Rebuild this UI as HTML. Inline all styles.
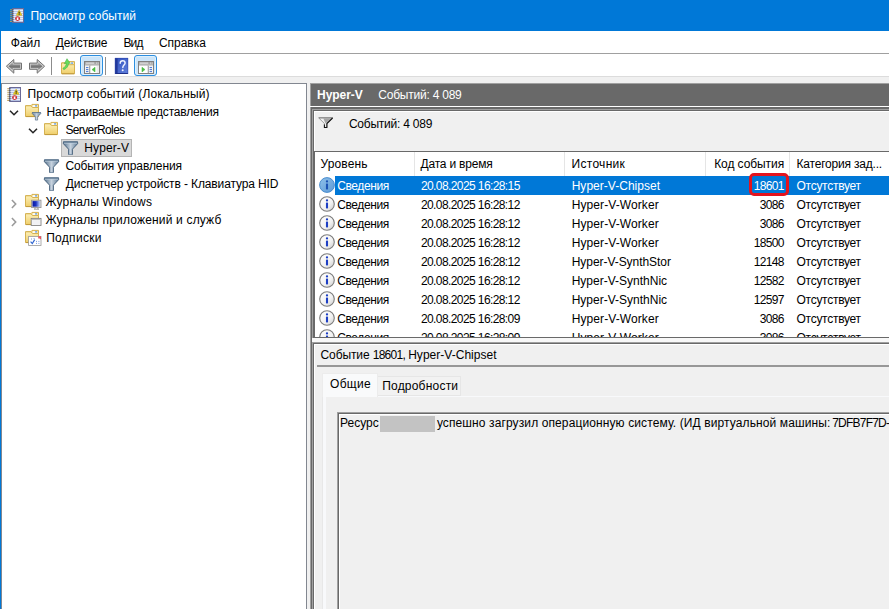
<!DOCTYPE html><html><head><meta charset="utf-8"><title>Event Viewer</title><style>
html,body{margin:0;padding:0}
body{width:889px;height:609px;overflow:hidden;position:relative;background:#f0f0f0;font:12px/16px "Liberation Sans",sans-serif;color:#000}
.a{position:absolute}
.t{position:absolute;white-space:pre;height:16px}
.i{position:absolute;overflow:visible}
.tb{position:absolute;left:0;top:0;width:889px;height:31px;background:#0078d7}
.menu{position:absolute;left:1px;top:31px;width:888px;height:22px;background:#fff}
.tool{position:absolute;left:1px;top:54px;width:888px;height:22px;background:#fff}
.btn{position:absolute;top:55px;width:21px;height:19px;border:1px solid #2d8fe0;border-radius:3px;background:#cce5f9;box-shadow:inset 0 0 0 1px #def0fc}
.sep{position:absolute;top:57px;width:1px;height:18px;background:#8c8c8c}
.tree{position:absolute;left:1px;top:83px;width:306px;height:540px;background:#fff;border:1px solid #828790;box-sizing:border-box;border-bottom:0}
.sel{position:absolute;left:61px;top:139px;width:69px;height:16px;background:#d9d9d9;border:1px solid #b4b4b4}
.rp{position:absolute;left:310px;top:83px;width:600px;height:540px;background:#696969;border-left:1px solid #a0a0a0;border-top:1px solid #a0a0a0;box-sizing:border-box}
.hl{position:absolute;background:#fff}
.f3{position:absolute;box-sizing:border-box;border-left:1px solid #a0a0a0;border-top:1px solid #a0a0a0;background:#696969}
.p{position:absolute;background:#f0f0f0;border-left:1px solid #fff;border-top:1px solid #fff;box-sizing:border-box}
.list{position:absolute;left:314px;top:151px;width:600px;height:187px;background:#fff;border-left:1px solid #696969;border-top:1px solid #696969;border-bottom:1px solid #696969;box-sizing:border-box;overflow:hidden}
.cs{position:absolute;top:152px;width:1px;height:24px;background:#e5e5e5}
.rowsel{position:absolute;left:335px;top:176px;width:560px;height:19px;background:#0078d7}
.red{position:absolute;left:749px;top:173px;width:34px;height:17px;border:3px solid #e4141e;border-radius:5px}
.clip{position:absolute;left:315px;top:152px;width:574px;height:185px;overflow:hidden}
.tab1{position:absolute;left:322px;top:373px;width:56px;height:24px;background:#f9fafb;border:1px solid #ececec;border-bottom:0;box-sizing:border-box}
.tab2{position:absolute;left:377px;top:376px;width:84px;height:20px;background:#f2f2f2;border:1px solid #e6e6e6;box-sizing:border-box}
.tabp{position:absolute;left:322px;top:396px;width:600px;height:240px;background:#f8f9fb;border-left:1px solid #e8e8e8;box-sizing:border-box}
.tabc{position:absolute;left:326px;top:397px;width:580px;height:230px;background:#f0f0f0}
.tx{position:absolute;left:337px;top:412px;width:600px;height:220px;box-sizing:border-box;border-left:1px solid #a0a0a0;border-top:1px solid #a0a0a0;background:#696969}
.tx2{position:absolute;left:1px;top:1px;right:0;bottom:0;background:#f0f0f0;border-left:1px solid #fff;border-top:1px solid #fff}
.redact{position:absolute;left:380px;top:416px;width:55px;height:16px;background:#c3c3c3}
</style></head><body>
<svg width="0" height="0" style="position:absolute"><defs>
<linearGradient id="gFold" x1="0" y1="0" x2="0" y2="1"><stop offset="0" stop-color="#fdf0b8"/><stop offset="1" stop-color="#efce6a"/></linearGradient>
<linearGradient id="gArr" x1="0" y1="0" x2="0" y2="1"><stop offset="0" stop-color="#b4b4b4"/><stop offset=".55" stop-color="#747474"/><stop offset="1" stop-color="#a4a4a4"/></linearGradient>
<linearGradient id="gFun" x1="0" y1="0" x2="1" y2="0"><stop offset="0" stop-color="#54708b"/><stop offset=".5" stop-color="#c6d2de"/><stop offset="1" stop-color="#5f7b96"/></linearGradient>
<linearGradient id="gHelp" x1="0" y1="0" x2="1" y2="1"><stop offset="0" stop-color="#2f50bd"/><stop offset="1" stop-color="#6180dc"/></linearGradient>
<linearGradient id="gInfo" x1="0" y1="0" x2="1" y2="1"><stop offset="0" stop-color="#ffffff"/><stop offset=".6" stop-color="#f2f2f2"/><stop offset="1" stop-color="#c8c8c8"/></linearGradient>
<linearGradient id="gInfoS" x1="0" y1="0" x2="1" y2="1"><stop offset="0" stop-color="#8fc0ea"/><stop offset="1" stop-color="#5c9ad6"/></linearGradient>
<linearGradient id="gMon" x1="0" y1="0" x2="1" y2="0"><stop offset="0" stop-color="#0a18a0"/><stop offset=".45" stop-color="#1a32c2"/><stop offset="1" stop-color="#c4d8fc"/></linearGradient>
<linearGradient id="gBtn" x1="0" y1="0" x2="0" y2="1"><stop offset="0" stop-color="#d6ebfb"/><stop offset=".45" stop-color="#cce4f7"/><stop offset="1" stop-color="#d2e8f9"/></linearGradient>
</defs></svg>
<div class="tb"></div>
<div class="menu"></div><div class="a" style="left:1px;top:53px;width:888px;height:1px;background:#a0a0a0"></div>
<div class="tool"></div><div class="a" style="left:1px;top:76px;width:888px;height:1px;background:#dcdcdc"></div>
<div class="a" style="left:0;top:0;width:1px;height:609px;background:#0078d7"></div>
<svg class="i" style="left:10px;top:8px" width="14" height="15" viewBox="0 0 14 15" ><rect x="2.700" y=".5" width="10.800" height="14" fill="#b6c2e4" stroke="#6a6a98"/>
<path d="M3.500 2.500h9.500M3.500 4.500h9.500M3.500 6.500h9.500M3.500 8.500h9.500M3.500 10.500h9.500M3.500 12.500h9.500" stroke="#e9eefa" stroke-width="1"/>
<path d="M.2 1.700h1.700M.2 3.700h1.700M.2 5.700h1.700M.2 7.700h1.700M.2 9.700h1.700M.2 11.700h1.700M.2 13.500h1.700" stroke="#c9a25a" stroke-width="1.100"/>
<path d="M1.800 1.700h1.700M1.800 3.700h1.700M1.800 5.700h1.700M1.800 7.700h1.700M1.800 9.700h1.700M1.800 11.700h1.700M1.800 13.500h1.700" stroke="#5e5e66" stroke-width="1.200"/>
<path d="M9.150 2.150l2.750 5.100h-5.500z" fill="#f4d31f" stroke="#c9a600" stroke-width=".55" stroke-linejoin="round"/>
<path d="M9.150 3.700v2M9.150 6.200v.700" stroke="#222" stroke-width="1.050"/>
<circle cx="7.600" cy="10.600" r="2.450" fill="#cf2227"/>
<path d="M6.700 9.700l1.800 1.800m0-1.800l-1.800 1.800" stroke="#fff" stroke-width="1.100"/></svg>
<svg class="i" style="left:6px;top:59px" width="16" height="15" viewBox="0 0 16 15" ><g><path d="M.4 7.200L7.800.5v3.600h7.700v6.200H7.800v3.900z" fill="#cdcdcd" stroke="#717171" stroke-width="1" stroke-linejoin="round"/><path d="M2.500 7.200l4.300-3.900v2.100h7.400v3.600H6.800v2.100z" fill="url(#gArr)"/></g></svg>
<svg class="i" style="left:29px;top:59px" width="16" height="15" viewBox="0 0 16 15" ><g transform="translate(16,0) scale(-1,1)"><path d="M.4 7.200L7.800.5v3.600h7.700v6.200H7.800v3.900z" fill="#cdcdcd" stroke="#717171" stroke-width="1" stroke-linejoin="round"/><path d="M2.500 7.200l4.300-3.900v2.100h7.400v3.600H6.800v2.100z" fill="url(#gArr)"/></g></svg>
<div class="sep" style="left:51px"></div><div class="sep" style="left:105px"></div>
<svg class="i" style="left:61px;top:58px" width="14" height="16" viewBox="0 0 14 16" ><g transform="translate(0,3.200)"><path d="M.5 1.700h5.300l1.200-1.300h6.500v3.200" fill="#f3d985" stroke="#d0aa45" stroke-width=".9" stroke-linejoin="round"/>
<rect x="7.700" y="1.200" width="4.700" height="1.700" fill="#fff"/><rect x="10.100" y="1.300" width="1.900" height="1.200" fill="#4b8de0"/>
<path d="M.5 1.800h5.600l1.300 1.700h6.100v9H.5z" fill="url(#gFold)" stroke="#d0aa45" stroke-width=".9" stroke-linejoin="round"/>
<path d="M.9 12.600h12.300" stroke="#bf9738" stroke-width=".9"/></g>
<path d="M6 .700l3.300 4.700-1.700-.2c-.2 3-1.800 5.200-4.800 6.500l-.9-1.400c2.300-1.200 3.300-2.800 3.300-5.100l-1.900.5z" fill="#66dd5c" stroke="#3aa83a" stroke-width=".5" stroke-linejoin="round"/></svg>
<div class="btn" style="left:80px"></div><div class="btn" style="left:134px"></div>
<svg class="i" style="left:84px;top:61px" width="16" height="13" viewBox="0 0 16 13" ><rect x=".5" y=".5" width="15" height="12" fill="#e4e4e4" stroke="#808080"/>
<rect x="1" y="1" width="14" height="3.600" fill="#9c9c9c"/><path d="M1.600 2.100h8.800" stroke="#f4f4f4" stroke-width="1"/><path d="M11.800 2.100h1M13.600 2.100h1" stroke="#fff" stroke-width="1"/>
<path d="M1 4.100h14" stroke="#ececec" stroke-width=".8"/><rect x="1" y="5" width="4.4" height="7" fill="#f4f4f4"/><path d="M5.9 4.6v7.8" stroke="#808080" stroke-width="1"/>
<path d="M2 6.6h2.4M2 8.6h2.4M2 10.6h2.4" stroke="#4674d4" stroke-width="1"/>
<rect x="6.4" y="5" width="8.6" height="7" fill="#fff"/><path d="M11 6.300v4.600L8 8.6z" fill="#49bd45" stroke="#49bd45" stroke-width=".6" stroke-linejoin="round"/><rect x="12.600" y="5" width="2.400" height="7" fill="#ececec"/></svg>
<svg class="i" style="left:115px;top:58px" width="13" height="16" viewBox="0 0 13 16" ><rect x="0" y="0" width="13" height="16" fill="url(#gHelp)"/><rect x="0" y="0" width="2.600" height="16" fill="#22389a"/><path d="M0 15.500h13" stroke="#1d2f88" stroke-width="1"/><path d="M.2 0v16M12.800 0v16M0 .3h13" stroke="#2b44ad" stroke-width=".6"/>
<path d="M5.200 5.200c0-1.700 1.100-2.500 2.400-2.500 1.400 0 2.500.800 2.500 2.200 0 1.900-2.300 2.300-2.300 4.500" fill="none" stroke="#eef2ff" stroke-width="1.450" stroke-linecap="round"/><circle cx="7.700" cy="12.300" r="1" fill="#eef2ff"/></svg>
<svg class="i" style="left:138px;top:61px" width="16" height="13" viewBox="0 0 16 13" ><rect x=".5" y=".5" width="15" height="12" fill="#e4e4e4" stroke="#808080"/>
<rect x="1" y="1" width="14" height="3.600" fill="#9c9c9c"/><path d="M1.600 2.100h8.800" stroke="#f4f4f4" stroke-width="1"/><path d="M11.800 2.100h1M13.600 2.100h1" stroke="#fff" stroke-width="1"/>
<path d="M1 4.100h14" stroke="#ececec" stroke-width=".8"/><rect x="10.600" y="5" width="4.400" height="7" fill="#f4f4f4"/><path d="M10.100 4.600v7.800" stroke="#808080" stroke-width="1"/>
<path d="M11.600 6.600h2.400M11.600 8.600h2.400M11.600 10.600h2.400" stroke="#4674d4" stroke-width="1"/>
<rect x="1" y="5" width="8.600" height="7" fill="#fff"/><path d="M4 6.300v4.600l3-2.300z" fill="#49bd45" stroke="#49bd45" stroke-width=".6" stroke-linejoin="round"/></svg>
<div class="tree"></div><div class="sel"></div>
<svg class="i" style="left:7px;top:87px" width="14" height="15" viewBox="0 0 14 15" ><rect x="2.700" y=".5" width="10.800" height="14" fill="#b6c2e4" stroke="#6a6a98"/>
<path d="M3.500 2.500h9.500M3.500 4.500h9.500M3.500 6.500h9.500M3.500 8.500h9.500M3.500 10.500h9.500M3.500 12.500h9.500" stroke="#e9eefa" stroke-width="1"/>
<path d="M.2 1.700h1.700M.2 3.700h1.700M.2 5.700h1.700M.2 7.700h1.700M.2 9.700h1.700M.2 11.700h1.700M.2 13.500h1.700" stroke="#c9a25a" stroke-width="1.100"/>
<path d="M1.800 1.700h1.700M1.800 3.700h1.700M1.800 5.700h1.700M1.800 7.700h1.700M1.800 9.700h1.700M1.800 11.700h1.700M1.800 13.500h1.700" stroke="#5e5e66" stroke-width="1.200"/>
<path d="M9.150 2.150l2.750 5.100h-5.500z" fill="#f4d31f" stroke="#c9a600" stroke-width=".55" stroke-linejoin="round"/>
<path d="M9.150 3.700v2M9.150 6.200v.700" stroke="#222" stroke-width="1.050"/>
<circle cx="7.600" cy="10.600" r="2.450" fill="#cf2227"/>
<path d="M6.700 9.700l1.800 1.800m0-1.800l-1.800 1.800" stroke="#fff" stroke-width="1.100"/></svg>
<svg class="i" style="left:8.6px;top:109.7px" width="10" height="6" viewBox="0 0 10 6" ><path d="M1 .800L5 4.700 9 .800" fill="none" stroke="#262626" stroke-width="1.550"/></svg>
<svg class="i" style="left:25px;top:104px" width="17" height="17" viewBox="0 0 17 17" ><path d="M.5 1.700h5.300l1.200-1.300h6.500v3.200" fill="#f3d985" stroke="#d0aa45" stroke-width=".9" stroke-linejoin="round"/>
<rect x="7.700" y="1.200" width="4.700" height="1.700" fill="#fff"/><rect x="10.100" y="1.300" width="1.900" height="1.200" fill="#4b8de0"/>
<path d="M.5 1.800h5.600l1.300 1.700h6.100v9H.5z" fill="url(#gFold)" stroke="#d0aa45" stroke-width=".9" stroke-linejoin="round"/>
<path d="M.9 12.600h12.300" stroke="#bf9738" stroke-width=".9"/><g transform="translate(7,8) scale(0.6)"><path d="M.4 1.300h14.200v1.400L9.400 8.200v5.300H5.600V8.200L.4 2.700z" fill="url(#gFun)" stroke="#46607a" stroke-width=".95" stroke-linejoin="round"/>
<path d="M.2.900h14.600" stroke="#4a6683" stroke-width="1.250"/><path d="M1 2.150h13" stroke="#bccddd" stroke-width=".9"/><path d="M6.100 13.300h2.800" stroke="#a9bccd" stroke-width=".7"/></g></svg>
<svg class="i" style="left:27.6px;top:127.7px" width="10" height="6" viewBox="0 0 10 6" ><path d="M1 .800L5 4.700 9 .800" fill="none" stroke="#262626" stroke-width="1.550"/></svg>
<svg class="i" style="left:44px;top:122px" width="14" height="13" viewBox="0 0 14 13" ><path d="M.5 1.700h5.300l1.200-1.300h6.500v3.200" fill="#f3d985" stroke="#d0aa45" stroke-width=".9" stroke-linejoin="round"/>
<rect x="7.700" y="1.200" width="4.700" height="1.700" fill="#fff"/><rect x="10.100" y="1.300" width="1.900" height="1.200" fill="#4b8de0"/>
<path d="M.5 1.800h5.600l1.300 1.700h6.100v9H.5z" fill="url(#gFold)" stroke="#d0aa45" stroke-width=".9" stroke-linejoin="round"/>
<path d="M.9 12.600h12.300" stroke="#bf9738" stroke-width=".9"/></svg>
<svg class="i" style="left:63px;top:141px" width="15" height="14" viewBox="0 0 15 14" ><g transform="translate(0,0) scale(1)"><path d="M.4 1.300h14.200v1.400L9.400 8.200v5.300H5.600V8.200L.4 2.700z" fill="url(#gFun)" stroke="#46607a" stroke-width=".95" stroke-linejoin="round"/>
<path d="M.2.900h14.600" stroke="#4a6683" stroke-width="1.250"/><path d="M1 2.150h13" stroke="#bccddd" stroke-width=".9"/><path d="M6.100 13.300h2.800" stroke="#a9bccd" stroke-width=".7"/></g></svg>
<svg class="i" style="left:44px;top:159px" width="15" height="14" viewBox="0 0 15 14" ><g transform="translate(0,0) scale(1)"><path d="M.4 1.300h14.200v1.400L9.400 8.200v5.300H5.600V8.200L.4 2.700z" fill="url(#gFun)" stroke="#46607a" stroke-width=".95" stroke-linejoin="round"/>
<path d="M.2.900h14.600" stroke="#4a6683" stroke-width="1.250"/><path d="M1 2.150h13" stroke="#bccddd" stroke-width=".9"/><path d="M6.100 13.300h2.800" stroke="#a9bccd" stroke-width=".7"/></g></svg>
<svg class="i" style="left:44px;top:177px" width="15" height="14" viewBox="0 0 15 14" ><g transform="translate(0,0) scale(1)"><path d="M.4 1.300h14.200v1.400L9.400 8.200v5.300H5.600V8.200L.4 2.700z" fill="url(#gFun)" stroke="#46607a" stroke-width=".95" stroke-linejoin="round"/>
<path d="M.2.900h14.600" stroke="#4a6683" stroke-width="1.250"/><path d="M1 2.150h13" stroke="#bccddd" stroke-width=".9"/><path d="M6.100 13.300h2.800" stroke="#a9bccd" stroke-width=".7"/></g></svg>
<svg class="i" style="left:10.8px;top:198.6px" width="6" height="10" viewBox="0 0 6 10" ><path d="M.900 1L4.700 5 .900 9" fill="none" stroke="#9a9a9a" stroke-width="1.550"/></svg>
<svg class="i" style="left:25px;top:194px" width="17" height="16" viewBox="0 0 17 16" ><path d="M.5 1.700h5.300l1.200-1.300h6.500v3.200" fill="#f3d985" stroke="#d0aa45" stroke-width=".9" stroke-linejoin="round"/>
<rect x="7.700" y="1.200" width="4.700" height="1.700" fill="#fff"/><rect x="10.100" y="1.300" width="1.900" height="1.200" fill="#4b8de0"/>
<path d="M.5 1.800h5.600l1.300 1.700h6.100v9H.5z" fill="url(#gFold)" stroke="#d0aa45" stroke-width=".9" stroke-linejoin="round"/>
<path d="M.9 12.600h12.300" stroke="#bf9738" stroke-width=".9"/><rect x="6.6" y="6.2" width="9.4" height="7.4" fill="#dcdcdc" stroke="#909090" stroke-width=".8"/>
<rect x="7.5" y="7.1" width="7.6" height="5.6" fill="url(#gMon)"/><path d="M9 15.2h5M10.3 13.8l-.6 1.3M12.6 13.8l.6 1.3" stroke="#8a8a8a" stroke-width=".8"/></svg>
<svg class="i" style="left:10.8px;top:216.6px" width="6" height="10" viewBox="0 0 6 10" ><path d="M.900 1L4.700 5 .900 9" fill="none" stroke="#9a9a9a" stroke-width="1.550"/></svg>
<svg class="i" style="left:25px;top:212px" width="17" height="15" viewBox="0 0 17 15" ><path d="M.5 1.700h5.300l1.200-1.300h6.500v3.200" fill="#f3d985" stroke="#d0aa45" stroke-width=".9" stroke-linejoin="round"/>
<rect x="7.700" y="1.200" width="4.700" height="1.700" fill="#fff"/><rect x="10.100" y="1.300" width="1.900" height="1.200" fill="#4b8de0"/>
<path d="M.5 1.800h5.600l1.300 1.700h6.100v9H.5z" fill="url(#gFold)" stroke="#d0aa45" stroke-width=".9" stroke-linejoin="round"/>
<path d="M.9 12.600h12.300" stroke="#bf9738" stroke-width=".9"/><rect x="6.2" y="6.4" width="9.8" height="7" fill="#fff" stroke="#808080" stroke-width=".9"/>
<rect x="6.700" y="6.900" width="8.800" height="1.300" fill="#bdbdbd"/><rect x="7.200" y="9" width="7.800" height="3.800" fill="#f1f1f4"/></svg>
<svg class="i" style="left:25px;top:230px" width="17" height="17" viewBox="0 0 17 17" ><path d="M.5 1.700h5.300l1.200-1.300h6.500v3.200" fill="#f3d985" stroke="#d0aa45" stroke-width=".9" stroke-linejoin="round"/>
<rect x="7.700" y="1.200" width="4.700" height="1.700" fill="#fff"/><rect x="10.100" y="1.300" width="1.900" height="1.200" fill="#4b8de0"/>
<path d="M.5 1.800h5.600l1.300 1.700h6.100v9H.5z" fill="url(#gFold)" stroke="#d0aa45" stroke-width=".9" stroke-linejoin="round"/>
<path d="M.9 12.600h12.300" stroke="#bf9738" stroke-width=".9"/><rect x="3.6" y="6.5" width="12.4" height="9" fill="#fff" stroke="#9a9a9a" stroke-width=".8"/>
<path d="M13 6.6h3v3z" fill="#e8404a"/><rect x="13.2" y="6.7" width="2.6" height="1.8" fill="#ee5a62"/>
<path d="M5.6 11.6l1.7 2 2.4-4" fill="none" stroke="#2a62d0" stroke-width="1.1"/>
<path d="M6 9h1M8.600 8.600h1M11 11.400h1M13.400 11.400h1M11 13.400h1M13.400 13.400h1" stroke="#7a9ae0" stroke-width="1"/></svg>
<div class="rp"></div>
<div class="hl" style="left:310px;top:106px;width:600px;height:1px"></div>
<div class="f3" style="left:312px;top:109px;width:600px;height:229px"></div>
<div class="p" style="left:314px;top:111px;width:600px;height:40px"></div>
<div class="list"></div>
<div class="cs" style="left:414px"></div>
<div class="cs" style="left:564px"></div>
<div class="cs" style="left:705px"></div>
<div class="cs" style="left:789px"></div>
<div class="rowsel"></div>
<div class="a" style="left:312px;top:338px;width:600px;height:4px;background:#f8f8f8"></div>
<div class="f3" style="left:312px;top:342px;width:600px;height:300px"></div>
<div class="p" style="left:314px;top:344px;width:600px;height:300px"></div>
<div class="a" style="left:317px;top:365px;width:600px;height:2px;background:#979797"></div>
<div class="tabp"></div><div class="tabc"></div><div class="tab2"></div><div class="tab1"></div>
<div class="tx"><div class="tx2"></div></div><div class="redact"></div>
<svg class="i" style="left:318px;top:117px" width="16" height="11" viewBox="0 0 16 11" ><path d="M.700.900h14L8.900 6.500v4H6.400V6.500z" fill="#f2f2f2" stroke="#8c8c8c" stroke-width=".8"/><path d="M5.400 1.500h7.600L8 6.300 7.400 6.300z" fill="#a6a6a6"/><path d="M.8.800h13.800" stroke="#6a6a6a" stroke-width=".7"/><path d="M14.600 1L8.900 6.500v4H6.400V7.600" fill="none" stroke="#111" stroke-width="1.050"/></svg>
<svg class="i" style="left:319px;top:177px" width="16" height="16" viewBox="0 0 16 16" ><circle cx="8" cy="8" r="7.400" fill="url(#gInfoS)" stroke="#3f86c9" stroke-width=".9"/>
<circle cx="8" cy="4.400" r="1.150" fill="#1b52b4"/><path d="M8 6.600v5.800" stroke="#1b52b4" stroke-width="2.100"/></svg>
<svg class="i" style="left:319px;top:196px" width="16" height="16" viewBox="0 0 16 16" ><circle cx="8" cy="8" r="7.300" fill="url(#gInfo)" stroke="#7c7c7c" stroke-width="1.100"/>
<circle cx="8" cy="4.400" r="1.150" fill="#1d3fc4"/><path d="M8 6.600v5.800" stroke="#1d3fc4" stroke-width="2.100"/></svg>
<svg class="i" style="left:319px;top:215px" width="16" height="16" viewBox="0 0 16 16" ><circle cx="8" cy="8" r="7.300" fill="url(#gInfo)" stroke="#7c7c7c" stroke-width="1.100"/>
<circle cx="8" cy="4.400" r="1.150" fill="#1d3fc4"/><path d="M8 6.600v5.800" stroke="#1d3fc4" stroke-width="2.100"/></svg>
<svg class="i" style="left:319px;top:234px" width="16" height="16" viewBox="0 0 16 16" ><circle cx="8" cy="8" r="7.300" fill="url(#gInfo)" stroke="#7c7c7c" stroke-width="1.100"/>
<circle cx="8" cy="4.400" r="1.150" fill="#1d3fc4"/><path d="M8 6.600v5.800" stroke="#1d3fc4" stroke-width="2.100"/></svg>
<svg class="i" style="left:319px;top:253px" width="16" height="16" viewBox="0 0 16 16" ><circle cx="8" cy="8" r="7.300" fill="url(#gInfo)" stroke="#7c7c7c" stroke-width="1.100"/>
<circle cx="8" cy="4.400" r="1.150" fill="#1d3fc4"/><path d="M8 6.600v5.800" stroke="#1d3fc4" stroke-width="2.100"/></svg>
<svg class="i" style="left:319px;top:272px" width="16" height="16" viewBox="0 0 16 16" ><circle cx="8" cy="8" r="7.300" fill="url(#gInfo)" stroke="#7c7c7c" stroke-width="1.100"/>
<circle cx="8" cy="4.400" r="1.150" fill="#1d3fc4"/><path d="M8 6.600v5.800" stroke="#1d3fc4" stroke-width="2.100"/></svg>
<svg class="i" style="left:319px;top:291px" width="16" height="16" viewBox="0 0 16 16" ><circle cx="8" cy="8" r="7.300" fill="url(#gInfo)" stroke="#7c7c7c" stroke-width="1.100"/>
<circle cx="8" cy="4.400" r="1.150" fill="#1d3fc4"/><path d="M8 6.600v5.800" stroke="#1d3fc4" stroke-width="2.100"/></svg>
<svg class="i" style="left:319px;top:310px" width="16" height="16" viewBox="0 0 16 16" ><circle cx="8" cy="8" r="7.300" fill="url(#gInfo)" stroke="#7c7c7c" stroke-width="1.100"/>
<circle cx="8" cy="4.400" r="1.150" fill="#1d3fc4"/><path d="M8 6.600v5.800" stroke="#1d3fc4" stroke-width="2.100"/></svg>
<div class="clip"><svg class="i" style="left:4px;top:177px" width="16" height="16" viewBox="0 0 16 16" ><circle cx="8" cy="8" r="7.300" fill="url(#gInfo)" stroke="#7c7c7c" stroke-width="1.100"/>
<circle cx="8" cy="4.400" r="1.150" fill="#1d3fc4"/><path d="M8 6.600v5.800" stroke="#1d3fc4" stroke-width="2.100"/></svg></div>
<div class="clip" style="left:0;top:0;width:889px;height:337px">
<span class="t" style="left:30.4px;top:8px;letter-spacing:0.01px;color:#fff">Просмотр событий</span>
<span class="t" style="left:10.8px;top:35px;letter-spacing:-0.02px;color:#000">Файл</span>
<span class="t" style="left:55.7px;top:35px;letter-spacing:-0.14px;color:#000">Действие</span>
<span class="t" style="left:123.5px;top:35px;letter-spacing:-0.88px;color:#000">Вид</span>
<span class="t" style="left:158.9px;top:35px;letter-spacing:-0.02px;color:#000">Справка</span>
<span class="t" style="left:27.6px;top:86px;letter-spacing:0.12px;color:#000">Просмотр событий (Локальный)</span>
<span class="t" style="left:46.5px;top:104px;letter-spacing:-0.20px;color:#000">Настраиваемые представления</span>
<span class="t" style="left:65.4px;top:122px;letter-spacing:-0.62px;color:#000">ServerRoles</span>
<span class="t" style="left:84.3px;top:140px;letter-spacing:0.10px;color:#000">Hyper-V</span>
<span class="t" style="left:65.4px;top:158px;letter-spacing:-0.10px;color:#000">События управления</span>
<span class="t" style="left:65.7px;top:176px;letter-spacing:-0.12px;color:#000">Диспетчер устройств - Клавиатура HID</span>
<span class="t" style="left:45.5px;top:194px;letter-spacing:0.14px;color:#000">Журналы Windows</span>
<span class="t" style="left:45.5px;top:212px;letter-spacing:0.17px;color:#000">Журналы приложений и служб</span>
<span class="t" style="left:46.2px;top:230px;letter-spacing:0.30px;color:#000">Подписки</span>
<span class="t" style="left:317.0px;top:87px;letter-spacing:-0.04px;color:#fff;font-weight:700">Hyper-V</span>
<span class="t" style="left:378.3px;top:87px;letter-spacing:-0.23px;color:#fff">Событий: 4 089</span>
<span class="t" style="left:348.9px;top:116px;letter-spacing:-0.23px;color:#000">Событий: 4 089</span>
<span class="t" style="left:320.4px;top:156px;letter-spacing:0.16px;color:#000">Уровень</span>
<span class="t" style="left:420.6px;top:156px;letter-spacing:-0.21px;color:#000">Дата и время</span>
<span class="t" style="left:571.5px;top:156px;letter-spacing:0.30px;color:#000">Источник</span>
<span class="t" style="left:714.2px;top:156px;letter-spacing:-0.08px;color:#000">Код события</span>
<span class="t" style="left:796.5px;top:156px;letter-spacing:-0.20px;color:#000">Категория зад...</span>
<span class="t" style="left:337.2px;top:178px;letter-spacing:-0.38px;color:#fff">Сведения</span>
<span class="t" style="left:420.9px;top:178px;letter-spacing:-0.59px;color:#fff">20.08.2025 16:28:15</span>
<span class="t" style="left:571.7px;top:178px;letter-spacing:0.02px;color:#fff">Hyper-V-Chipset</span>
<span class="t" style="right:105.2px;top:178px;letter-spacing:-0.67px;color:#fff">18601</span>
<span class="t" style="left:796.5px;top:178px;letter-spacing:-0.27px;color:#fff">Отсутствует</span>
<span class="t" style="left:337.2px;top:197px;letter-spacing:-0.38px;color:#000">Сведения</span>
<span class="t" style="left:420.9px;top:197px;letter-spacing:-0.59px;color:#000">20.08.2025 16:28:12</span>
<span class="t" style="left:571.7px;top:197px;letter-spacing:0.09px;color:#000">Hyper-V-Worker</span>
<span class="t" style="right:105.2px;top:197px;letter-spacing:-0.67px;color:#000">3086</span>
<span class="t" style="left:796.5px;top:197px;letter-spacing:-0.27px;color:#000">Отсутствует</span>
<span class="t" style="left:337.2px;top:216px;letter-spacing:-0.38px;color:#000">Сведения</span>
<span class="t" style="left:420.9px;top:216px;letter-spacing:-0.59px;color:#000">20.08.2025 16:28:12</span>
<span class="t" style="left:571.7px;top:216px;letter-spacing:0.09px;color:#000">Hyper-V-Worker</span>
<span class="t" style="right:105.2px;top:216px;letter-spacing:-0.67px;color:#000">3086</span>
<span class="t" style="left:796.5px;top:216px;letter-spacing:-0.27px;color:#000">Отсутствует</span>
<span class="t" style="left:337.2px;top:235px;letter-spacing:-0.38px;color:#000">Сведения</span>
<span class="t" style="left:420.9px;top:235px;letter-spacing:-0.59px;color:#000">20.08.2025 16:28:12</span>
<span class="t" style="left:571.7px;top:235px;letter-spacing:0.09px;color:#000">Hyper-V-Worker</span>
<span class="t" style="right:105.2px;top:235px;letter-spacing:-0.67px;color:#000">18500</span>
<span class="t" style="left:796.5px;top:235px;letter-spacing:-0.27px;color:#000">Отсутствует</span>
<span class="t" style="left:337.2px;top:254px;letter-spacing:-0.38px;color:#000">Сведения</span>
<span class="t" style="left:420.9px;top:254px;letter-spacing:-0.59px;color:#000">20.08.2025 16:28:12</span>
<span class="t" style="left:571.7px;top:254px;letter-spacing:-0.05px;color:#000">Hyper-V-SynthStor</span>
<span class="t" style="right:105.2px;top:254px;letter-spacing:-0.67px;color:#000">12148</span>
<span class="t" style="left:796.5px;top:254px;letter-spacing:-0.27px;color:#000">Отсутствует</span>
<span class="t" style="left:337.2px;top:273px;letter-spacing:-0.38px;color:#000">Сведения</span>
<span class="t" style="left:420.9px;top:273px;letter-spacing:-0.59px;color:#000">20.08.2025 16:28:12</span>
<span class="t" style="left:571.7px;top:273px;letter-spacing:0.00px;color:#000">Hyper-V-SynthNic</span>
<span class="t" style="right:105.2px;top:273px;letter-spacing:-0.67px;color:#000">12582</span>
<span class="t" style="left:796.5px;top:273px;letter-spacing:-0.27px;color:#000">Отсутствует</span>
<span class="t" style="left:337.2px;top:292px;letter-spacing:-0.38px;color:#000">Сведения</span>
<span class="t" style="left:420.9px;top:292px;letter-spacing:-0.59px;color:#000">20.08.2025 16:28:12</span>
<span class="t" style="left:571.7px;top:292px;letter-spacing:0.00px;color:#000">Hyper-V-SynthNic</span>
<span class="t" style="right:105.2px;top:292px;letter-spacing:-0.67px;color:#000">12597</span>
<span class="t" style="left:796.5px;top:292px;letter-spacing:-0.27px;color:#000">Отсутствует</span>
<span class="t" style="left:337.2px;top:311px;letter-spacing:-0.38px;color:#000">Сведения</span>
<span class="t" style="left:420.9px;top:311px;letter-spacing:-0.59px;color:#000">20.08.2025 16:28:09</span>
<span class="t" style="left:571.7px;top:311px;letter-spacing:0.09px;color:#000">Hyper-V-Worker</span>
<span class="t" style="right:105.2px;top:311px;letter-spacing:-0.67px;color:#000">3086</span>
<span class="t" style="left:796.5px;top:311px;letter-spacing:-0.27px;color:#000">Отсутствует</span>
<span class="t" style="left:337.2px;top:330px;letter-spacing:-0.38px;color:#000">Сведения</span>
<span class="t" style="left:420.9px;top:330px;letter-spacing:-0.59px;color:#000">20.08.2025 16:28:09</span>
<span class="t" style="left:571.7px;top:330px;letter-spacing:0.09px;color:#000">Hyper-V-Worker</span>
<span class="t" style="right:105.2px;top:330px;letter-spacing:-0.67px;color:#000">3086</span>
<span class="t" style="left:796.5px;top:330px;letter-spacing:-0.27px;color:#000">Отсутствует</span>
</div>
<span class="t" style="left:320.5px;top:347px;letter-spacing:-0.10px;color:#000">Событие</span>
<span class="t" style="left:372.7px;top:347px;letter-spacing:-0.72px;color:#000">18601,</span>
<span class="t" style="left:408.2px;top:347px;letter-spacing:0.02px;color:#000">Hyper-V-Chipset</span>
<span class="t" style="left:330.0px;top:376px;letter-spacing:0.30px;color:#000">Общие</span>
<span class="t" style="left:382.2px;top:378px;letter-spacing:0.21px;color:#000">Подробности</span>
<span class="t" style="left:340.1px;top:415px;letter-spacing:-0.01px;color:#000">Ресурс</span>
<span class="t" style="left:436.9px;top:415px;letter-spacing:0.11px;color:#000">успешно загрузил операционную систему. (ИД виртуальной машины:</span>
<span class="t" style="left:832.2px;top:415px;letter-spacing:-0.78px;color:#000">7DFB7F7D-</span>
<div class="red"></div>
</body></html>
